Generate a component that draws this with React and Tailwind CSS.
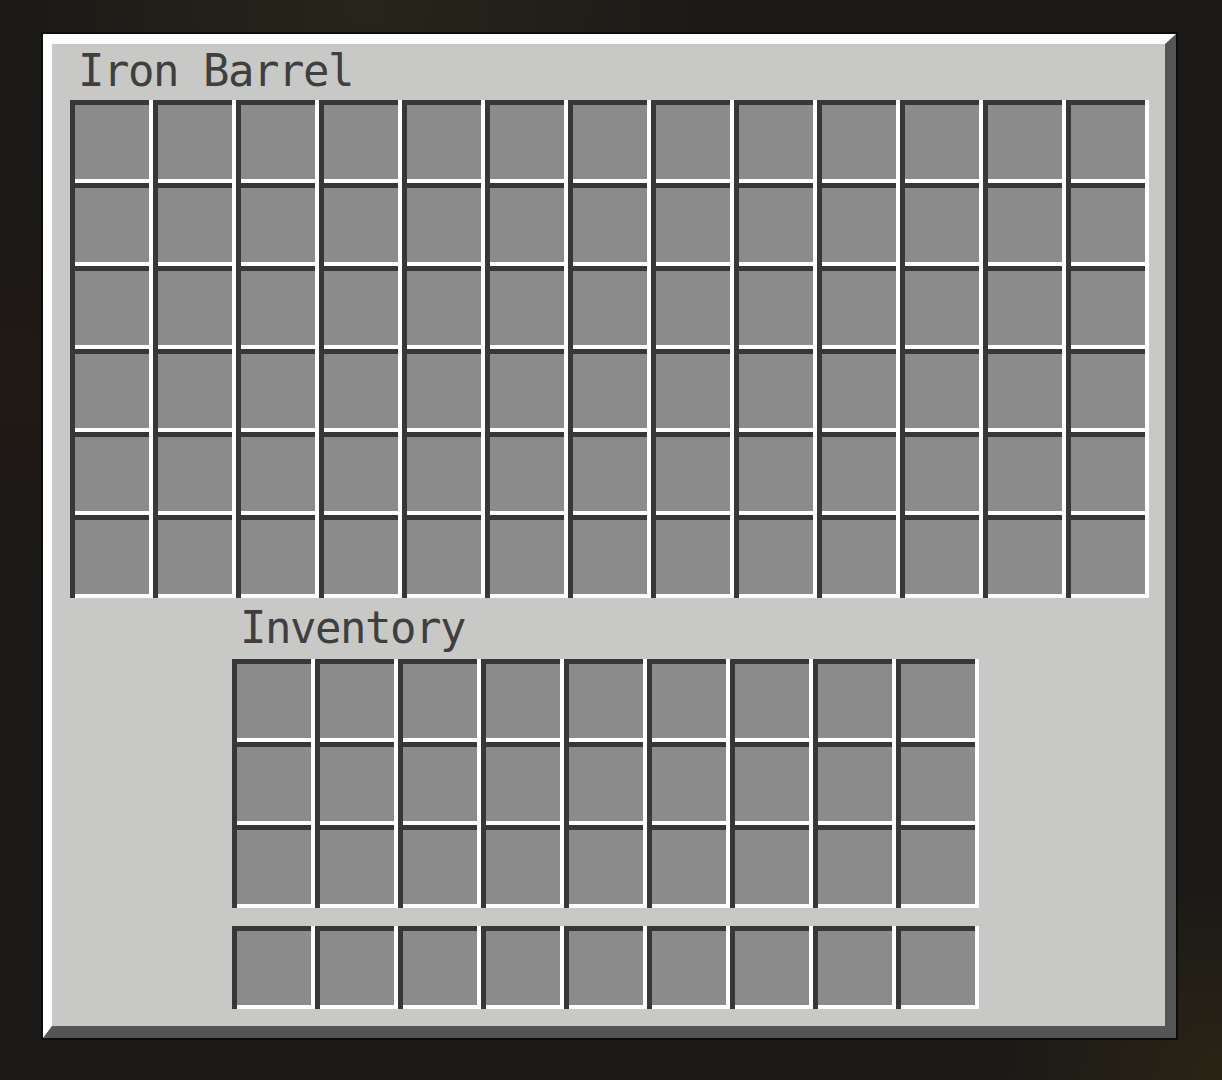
const BARREL_COLS = 13;
const BARREL_ROWS = 6;
const INV_COLS = 9;

// left/right strips go full height, top/bottom sit under them, like the game's slot texture
function Slot() {
  return (
    <div className="h-[83px] w-[83px] bg-[#8b8b8b] shadow-[inset_5px_0_0_#373737,inset_-4px_0_0_#ffffff,inset_0_5px_0_#373737,inset_0_-4px_0_#ffffff]" />
  );
}

function SlotGrid({ cols, rows }) {
  return (
    <div
      className={cols === 13 ? "grid w-fit grid-cols-13" : "grid w-fit grid-cols-9"}
    >
      {Array.from({ length: cols * rows }).map((_, i) => (
        <Slot key={i} />
      ))}
    </div>
  );
}

function Title({ children, className = "" }) {
  return (
    <div
      className={`h-[44px] text-[44px] leading-[44px] tracking-[-1.5px] text-[#3f3f3f] ${className}`}
      style={{ fontFamily: '"DejaVu Sans Mono", "Liberation Mono", monospace' }}
    >
      {children}
    </div>
  );
}

export default function App() {
  return (
    <div className="h-[1080px] w-full overflow-hidden bg-[#1a1917] bg-[radial-gradient(ellipse_at_30%_0%,#28251a_0%,transparent_30%),radial-gradient(ellipse_at_100%_100%,#2a2415_0%,transparent_14%),radial-gradient(ellipse_at_0%_35%,#211916_0%,transparent_22%)] pt-[32px] pl-[41px]">
      <div className="h-[1008px] w-[1137px] border-2 border-[#0c0c0c]">
        <div className="h-full w-full border-t-[10px] border-r-[11px] border-b-[12px] border-l-[9px] border-t-white border-r-[#555555] border-b-[#555555] border-l-white bg-[#c8c9c7]">
          <div className="pt-[5px]">
            <Title className="ml-[26px]">Iron Barrel</Title>
            <div className="mt-[7px] ml-[18px]">
              <SlotGrid cols={BARREL_COLS} rows={BARREL_ROWS} />
            </div>
            <Title className="mt-[8px] ml-[188px]">Inventory</Title>
            <div className="mt-[9px] ml-[180px]">
              <SlotGrid cols={INV_COLS} rows={3} />
            </div>
            <div className="mt-[18px] ml-[180px]">
              <SlotGrid cols={INV_COLS} rows={1} />
            </div>
          </div>
        </div>
      </div>
    </div>
  );
}
